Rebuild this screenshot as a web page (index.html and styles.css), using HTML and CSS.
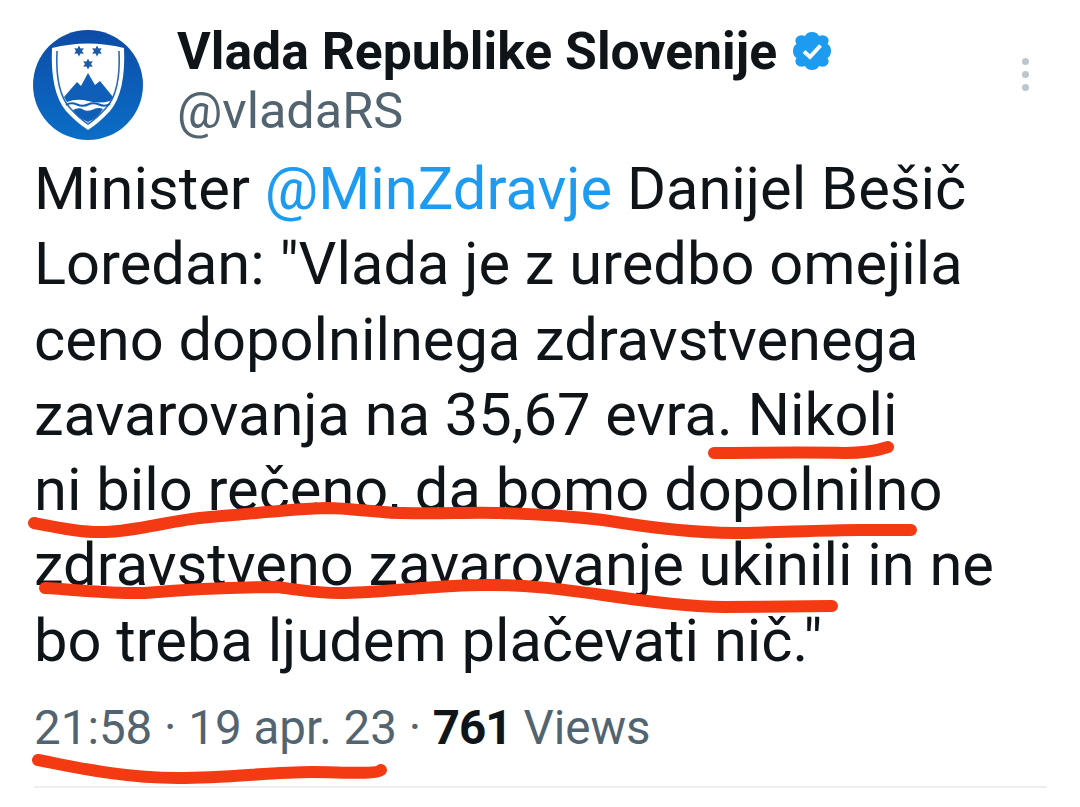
FILE: index.html
```html
<!DOCTYPE html>
<html lang="sl">

<head>
  <meta charset="UTF-8" />
  <title>Vlada Republike Slovenije</title>
  <link rel="stylesheet" href="styles.css">
</head>

<body>
  <div class="tweet">
    <div class="head">
      <svg class="avatar" viewBox="0 0 110 110">
        <defs>
          <linearGradient id="disc" x1="0" y1="0" x2="0" y2="1">
            <stop offset="0" stop-color="#0d4ca6" />
            <stop offset="1" stop-color="#0b6ec6" />
          </linearGradient>
          <path id="star" d="M0 -5.500 L1.500 -2.600 L4.800 -2.800 L3 0 L4.800 2.800 L1.500 2.600 L0 5.500 L-1.500 2.600 L-4.800 2.800 L-3 0 L-4.800 -2.800 L-1.500 -2.600Z" />
        </defs>
        <circle cx="55" cy="55" r="55" fill="url(#disc)" />
        <path d="M19 18 Q55 9 91 18 Q93 62 77 81 Q66 93 55 100 Q44 93 33 81 Q17 62 19 18Z" fill="#fff" />
        <path d="M24 21 Q22 62 37 78 Q47 89 55 94 Q63 89 73 78 Q88 62 86 21" fill="none" stroke="#2a6cb8" stroke-width="1.600" />
        <path d="M31 67 L44 52 L48 56 L55 43 L62 55 L67 51 L80 67 L77 71 Q66 74 55 71 Q44 68 34 72Z" fill="#0f5fb8" />
        <path d="M33 75 Q38 72 44 74.500 T55 74.500 T66 74.500 T77 74" fill="none" stroke="#0f5fb8" stroke-width="2" />
        <path d="M40 80 Q46 77 50 79.500 T60 79.500 T70 79 Q65 88 55 92 Q45 88 40 80Z" fill="#0f5fb8" />
        <g fill="#1d5aa6">
          <use href="#star" x="46" y="21" />
          <use href="#star" x="64" y="21" />
          <use href="#star" x="55" y="34" />
        </g>
      </svg>
      <div class="who">
        <div class="name-row">
          <span class="name">Vlada Republike Slovenije</span>
          <svg class="badge" viewBox="0 0 40 40">
            <path d="M20 1 Q25 1 27 5 Q32 3 35 6 Q38 9 35.500 13 Q39 15 39 20 Q39 25 35.500 27 Q38 31 35 34 Q32 37 27 35 Q25 39 20 39 Q15 39 13 35 Q8 37 5 34 Q2 31 4.500 27 Q1 25 1 20 Q1 15 4.500 13 Q2 9 5 6 Q8 3 13 5 Q15 1 20 1Z" fill="#1d9bf0" />
            <path d="M12 20.500 L18 26 L28.500 14.500" fill="none" stroke="#fff" stroke-width="4" />
          </svg>
        </div>
        <div class="handle">@vladaRS</div>
      </div>
      <div class="more"><i></i><i></i><i></i></div>
    </div>

    <p class="text">Minister <span class="mention">@MinZdravje</span> Danijel Bešič<br>
      Loredan: "Vlada je z uredbo omejila<br>
      ceno dopolnilnega zdravstvenega<br>
      zavarovanja na 35,67 evra. Nikoli<br>
      ni bilo rečeno, da bomo dopolnilno<br>
      zdravstveno zavarovanje ukinili in ne<br>
      bo treba ljudem plačevati nič."</p>

    <div class="meta">21:58 · 19 apr. 23 · <b>761</b> Views</div>
    <div class="rule"></div>
  </div>

  <!-- red marker strokes drawn over the screenshot -->
  <svg class="marks" viewBox="0 0 1080 807">
    <path d="M714 453 C760 453 800 452 845 453 C862 453 876 451 888 447" />
    <path d="M34 523 C60 528 85 533 105 532 C140 531 170 520 210 517 C250 514 290 509 327 508 C350 508 380 513 403 513 C440 514 470 512 500 513 C540 514 570 516 603 520 C640 526 690 533 734 533 C770 533 820 530 860 530 L911 530" />
    <path d="M45 588 C80 590 115 594 145 593 C180 590 230 587 276 587 C295 589 320 594 345 593 C390 592 440 585 483 585 C520 584 560 589 603 595 C650 602 690 607 724 607 C760 607 800 606 832 606" />
    <path d="M38 760 C70 766 120 778 178 778 C230 778 270 772 312 772 C340 772 375 775 381 770" />
  </svg>
</body>

</html>
```

FILE: styles.css
```css
body {
  margin: 0;
  background-color: #fff;
  font-family: "Roboto", sans-serif;
  color: #0f1419;
  overflow: hidden;
}

.tweet {
  padding: 22px 33px 0 34px;
  height: 785px;
}

.head {
  display: flex;
  align-items: flex-start;
  gap: 34px;
}

.avatar {
  width: 110px;
  height: 110px;
  margin-top: 8px;
  margin-left: -1px;
  flex: none;
}

.who {
  flex: 1;
}

.name-row {
  display: flex;
  align-items: center;
  gap: 15px;
  height: 58px;
}

.name {
  font-size: 51.700px;
  font-weight: 700;
}

.badge {
  width: 40px;
  height: 40px;
}

.handle {
  font-size: 50.400px;
  color: #536471;
  line-height: 62px;
}

.more {
  display: flex;
  flex-direction: column;
  gap: 6px;
  margin: 36px 18px 0 0;
}

.more i {
  display: block;
  width: 7px;
  height: 7px;
  border-radius: 50%;
  background-color: #bcc6cd;
}

.text {
  margin: 10px 0 0;
  font-size: 59.600px;
  line-height: 75.300px;
}

.mention {
  color: #1d9bf0;
}

.meta {
  margin-top: 21px;
  font-size: 47.500px;
  color: #536471;
}

.meta b {
  color: #0f1419;
  letter-spacing: -1px;
}

.rule {
  margin-top: 30px;
  height: 2px;
  background-color: #eceeef;
}

.marks {
  position: absolute;
  left: 0;
  top: 0;
  width: 1080px;
  height: 807px;
  fill: none;
  stroke: #f33a12;
  stroke-width: 12;
  stroke-linecap: round;
  stroke-linejoin: round;
}
```
